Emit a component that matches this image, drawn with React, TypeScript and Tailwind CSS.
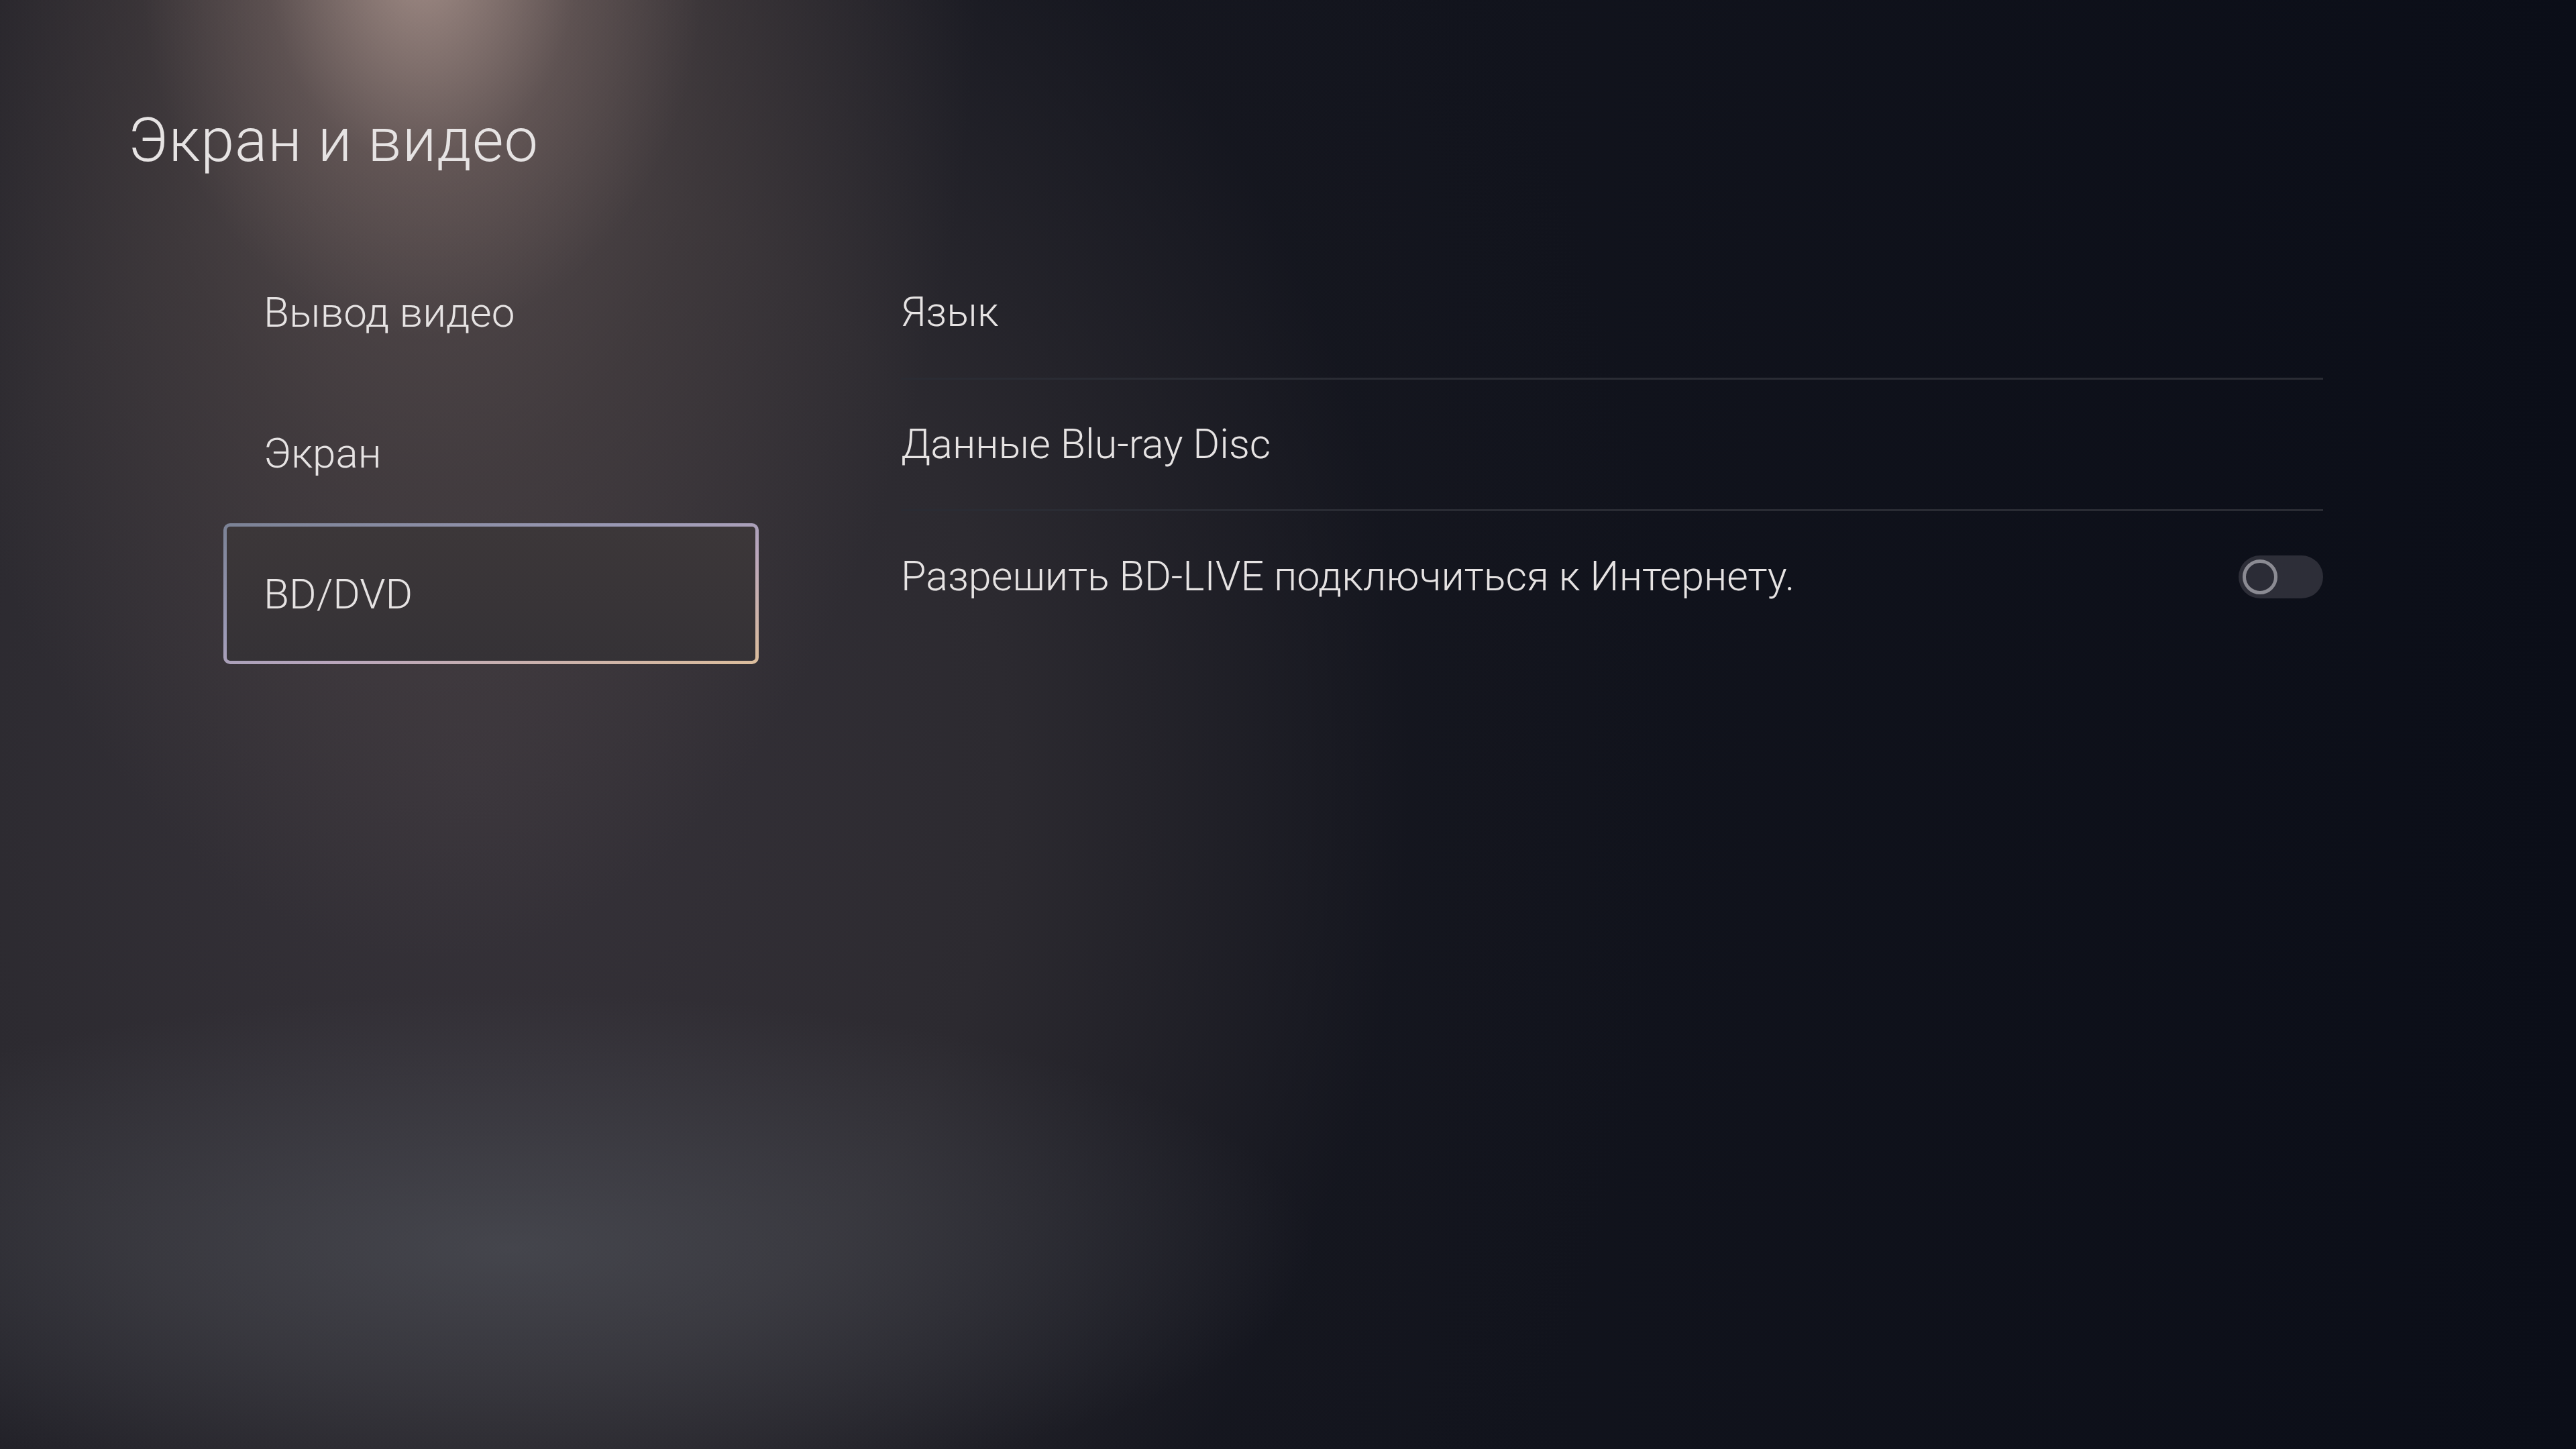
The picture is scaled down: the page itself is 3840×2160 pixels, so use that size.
import React, { useState } from 'react';

const font = "font-['Roboto','Liberation_Sans',sans-serif]";

const menu = ['Вывод видео', 'Экран', 'BD/DVD'];

const Toggle: React.FC<{ on: boolean; onChange: () => void }> = ({ on, onChange }) => (
  <button
    onClick={onChange}
    className="w-[126px] h-[64px] rounded-full bg-[#2d2e38] flex items-center px-[6px]"
  >
    <span
      className={`w-[52px] h-[52px] rounded-full border-[5px] border-[#8b8b93] bg-[#2b2c36] ${on ? 'ml-auto' : ''}`}
    />
  </button>
);

const App: React.FC = () => {
  const [active, setActive] = useState(2);
  const [bdLive, setBdLive] = useState(false);

  return (
    <div
      className={`w-[3840px] h-[2160px] overflow-hidden text-[#e6e3e3] font-light ${font} bg-[radial-gradient(ellipse_420px_560px_at_630px_-60px,rgba(205,178,168,0.6),rgba(160,135,128,0.22)_55%,transparent_100%),radial-gradient(ellipse_820px_1550px_at_640px_-120px,rgba(128,110,106,0.6),rgba(92,80,78,0.38)_55%,transparent_100%),radial-gradient(ellipse_1200px_380px_at_760px_1860px,rgba(90,94,102,0.5),transparent_100%),radial-gradient(ellipse_2000px_2300px_at_700px_1150px,#37333a_0%,#2c2a30_40%,rgba(24,25,33,0.4)_70%,transparent_90%),linear-gradient(to_right,#1b1b23,#12141d_55%,#0b0e18)]`}
    >
      <h1 className="pl-[191px] pt-[165px] text-[90px] leading-none font-light tracking-[1px]">Экран и видео</h1>

      <div className="flex pl-[333px] mt-[105px]">
        {/* left menu */}
        <div className="w-[798px] flex flex-col">
          {menu.map((label, i) =>
            i === active ? (
              <div
                key={label}
                onClick={() => setActive(i)}
                className="h-[210px] rounded-[10px] border-[5px] border-transparent flex items-center pl-[55px] text-[62px] [background:linear-gradient(#3c3739,#353236)_padding-box,linear-gradient(to_bottom_right,#7b8295,#9c9ab6_40%,#b9a6bc_60%,#dcbd9c)_border-box]"
              >
                {label}
              </div>
            ) : (
              <div
                key={label}
                onClick={() => setActive(i)}
                className="h-[210px] flex items-center pl-[60px] text-[62px] cursor-pointer"
              >
                {label}
              </div>
            )
          )}
        </div>

        {/* right list */}
        <div className="ml-[212px] w-[2120px] mt-[9px] flex flex-col text-[61px]">
          <div className="h-[197px] flex items-center border-b-[3px] border-[#2a2c34]">Язык</div>
          <div className="h-[196px] flex items-center border-b-[3px] border-[#2a2c34]">Данные Blu-ray Disc</div>
          <div className="h-[196px] flex items-center justify-between">
            <span>Разрешить BD-LIVE подключиться к Интернету.</span>
            <Toggle on={bdLive} onChange={() => setBdLive(v => !v)} />
          </div>
        </div>
      </div>
    </div>
  );
};

export default App;
